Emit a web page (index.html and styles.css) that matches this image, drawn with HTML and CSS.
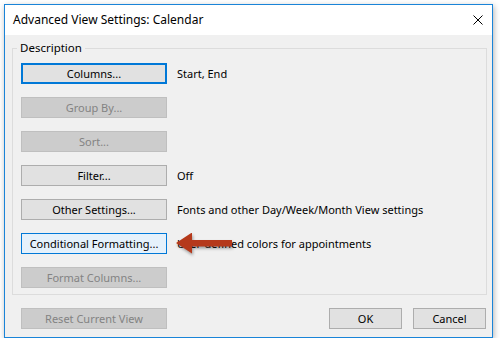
FILE: index.html
```html
<!DOCTYPE html>
<html lang="en">
<head>
  <meta charset="UTF-8" />
  <title>Advanced View Settings: Calendar</title>
  <link rel="stylesheet" href="styles.css">
</head>
<body>
  <div class="dialog">
    <div class="titlebar">
      <span class="title">Advanced View Settings: Calendar</span>
      <svg class="close" width="10" height="10" viewBox="0 0 10 10">
        <path d="M0.5 0.5 L9.5 9.5 M9.5 0.5 L0.5 9.5" stroke="#000" stroke-width="1" fill="none" />
      </svg>
    </div>

    <fieldset class="group">
      <legend>Description</legend>
      <div class="row">
        <button class="btn default">Columns...</button>
        <span class="desc">Start, End</span>
      </div>
      <div class="row">
        <button class="btn" disabled>Group By...</button>
      </div>
      <div class="row">
        <button class="btn" disabled>Sort...</button>
      </div>
      <div class="row">
        <button class="btn">Filter...</button>
        <span class="desc">Off</span>
      </div>
      <div class="row">
        <button class="btn">Other Settings...</button>
        <span class="desc">Fonts and other Day/Week/Month View settings</span>
      </div>
      <div class="row">
        <button class="btn hover">Conditional Formatting...</button>
        <span class="desc">User-defined colors for appointments</span>
        <!-- стрілка поверх тексту -->
        <svg class="arrow" width="80" height="24" viewBox="0 0 80 24">
          <path d="M1 10 L17 -0.5 L17 7 L57 7 L57 13.5 L17 13.5 L17 20.5 Z" fill="#b5391b" />
        </svg>
      </div>
      <div class="row">
        <button class="btn" disabled>Format Columns...</button>
      </div>
    </fieldset>

    <div class="footer">
      <button class="btn" disabled>Reset Current View</button>
      <div class="actions">
        <button class="btn small">OK</button>
        <button class="btn small">Cancel</button>
      </div>
    </div>
  </div>
</body>
</html>
```

FILE: styles.css
```css
* {
  box-sizing: border-box;
  margin: 0;
  padding: 0;
}
body {
  background: #fff;
  font-family: 'Noto Sans', 'Open Sans', sans-serif;
  font-size: 11px;
  color: #000;
}
.dialog {
  margin: 4px 0 0 4px;
  width: 489px;
  background: #f0f0f0;
  border: 1px solid #1a84d8;
  box-shadow: 1px 2px 6px rgba(0,0,0,0.3);
}
.titlebar {
  height: 30px;
  background: #fff;
  display: flex;
  align-items: center;
  justify-content: space-between;
  padding: 0 9px 0 8px;
}
.title {
  font-size: 12px;
  line-height: 16px;
}
.close {
  display: block;
}
.group {
  margin: 6px 5px 0 7px;
  border: 1px solid #dcdcdc;
  padding: 8px 8px 6px 8px;
  display: flex;
  flex-direction: column;
  gap: 13px;
}
.group legend {
  margin-left: -4px;
  padding: 0 3px;
  line-height: 14px;
  font-size: 11.5px;
}
.row {
  display: flex;
  align-items: center;
  gap: 10px;
  position: relative;
  height: 21px;
}
.btn {
  width: 146px;
  height: 21px;
  font-family: inherit;
  font-size: 11px;
  color: #000;
  background: #e1e1e1;
  border: 1px solid #adadad;
  line-height: 17px;
  flex-shrink: 0;
}
.btn.default {
  border: 2px solid #0078d7;
}
.btn.hover {
  background: #e5f1fb;
  border-color: #0078d7;
}
.btn:disabled {
  background: #cccccc;
  border-color: #bfbfbf;
  color: #838383;
}
.btn.small {
  width: 73px;
}
.desc {
  white-space: nowrap;
}
.arrow {
  position: absolute;
  left: 154px;
  top: 0;
  filter: drop-shadow(1px 2px 1.5px rgba(0,0,0,0.35));
}
.footer {
  display: flex;
  justify-content: space-between;
  padding: 13px 6px 8px 16px;
}
.actions {
  display: flex;
  gap: 11px;
}
```
